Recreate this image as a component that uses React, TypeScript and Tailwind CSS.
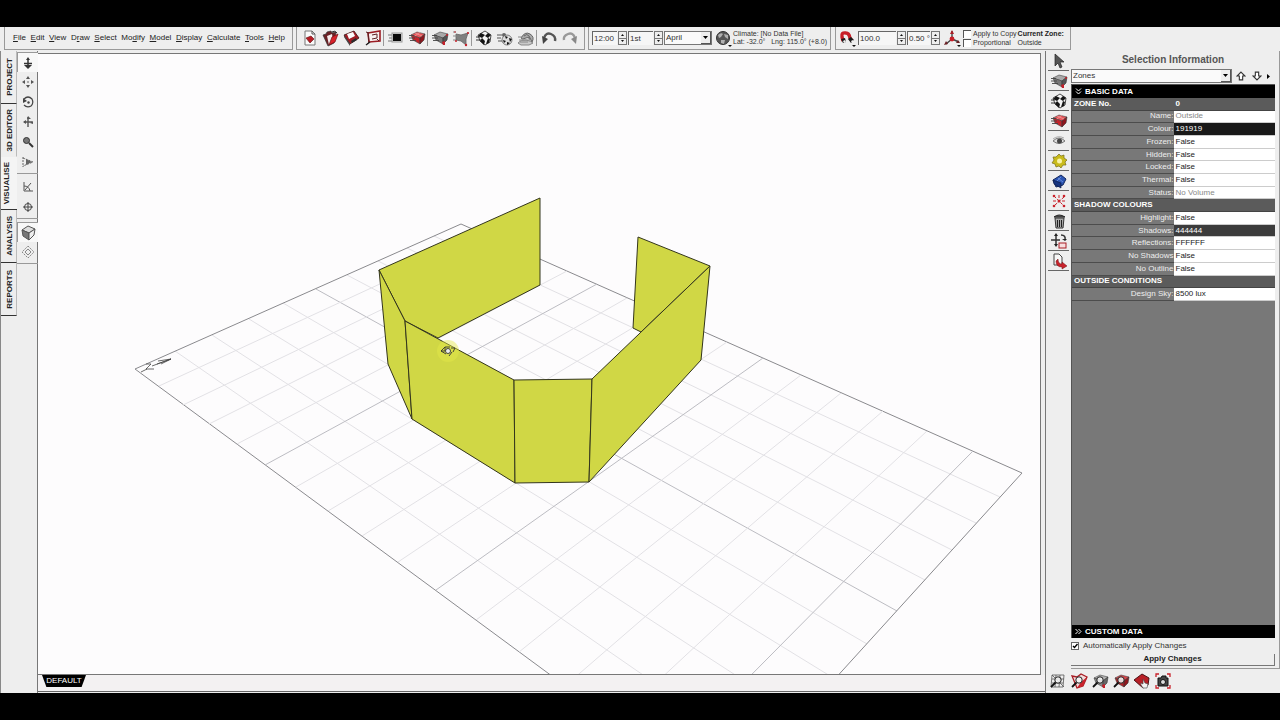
import type { ReactNode } from "react";

const MENUS = ["File", "Edit", "View", "Draw", "Select", "Modify", "Model", "Display", "Calculate", "Tools", "Help"];
// index of the underlined access key in each menu name
const ACCESS_KEYS = [0, 0, 0, 1, 0, 2, 0, 0, 0, 0, 0];

const TABS = ["PROJECT", "3D EDITOR", "VISUALISE", "ANALYSIS", "REPORTS"];

function Icon({ children }: { children: ReactNode }) {
  return (
    <svg width="18" height="18" viewBox="0 0 18 18" fill="none" aria-hidden="true">
      {children}
    </svg>
  );
}

// Tilted slab used by most of the model icons
function Slab({ top, left, right }: { top: string; left: string; right: string }) {
  return (
    <>
      <path d="M3 6 9 3 17 5 12 9z" fill={top} stroke="#444" strokeWidth="0.6" />
      <path d="M3 6 12 9 12 15 5 11z" fill={left} stroke="#444" strokeWidth="0.6" />
      <path d="M17 5 12 9 12 15 16 11z" fill={right} stroke="#333" strokeWidth="0.6" />
    </>
  );
}

function Lens() {
  return (
    <>
      <circle cx="9" cy="8" r="3.2" fill="#f4f4f4" fillOpacity="0.85" stroke="#222" />
      <path d="M6.5 10.5 2 15" stroke="#111" strokeWidth="1.8" />
    </>
  );
}

const SpeedLines = <path d="M1 6.5h5M1 9h6M2 11.5h6" stroke="#444" strokeWidth="0.9" />;

const NewIcon = (
  <Icon>
    <path d="M4 2h7l3 3v11H4z" fill="#fafafa" stroke="#777" />
    <path d="M11 2v3h3" stroke="#555" />
    <path d="m5 9 5-2 3 3-4 4z" fill="#b81c24" stroke="#5c1010" strokeWidth="0.6" />
  </Icon>
);

const OpenIcon = (
  <Icon>
    <path d="m1 6 3-1 1-2 4-1 1 2 4-1-2 11-6 3z" fill="#6b2226" stroke="#333" strokeWidth="0.7" />
    <path d="m5 7 5-2 1 6-4 5z" fill="#f5eded" />
    <path d="m7 16 3-8 6-3-3 8z" fill="#d9222a" stroke="#701015" strokeWidth="0.7" />
    <path d="M10 3q3-2 5 1" stroke="#222" />
  </Icon>
);

const SaveIcon = (
  <Icon>
    <path d="m1 6 10-4 5 7-9 6z" fill="#a01c24" stroke="#3a1113" strokeWidth="0.8" />
    <path d="m4 5 6-2 2 4-6 3z" fill="#fbfbfb" />
    <path d="m8 12 5-3 1 2-5 3z" fill="#2b2b2b" />
    <path d="m1 6 6 9v2L1 8z" fill="#444" />
  </Icon>
);

const PublishIcon = (
  <Icon>
    <path d="M4 4 16 2v10l-11 1z" fill="#f7f0f0" stroke="#9c1d24" strokeWidth="1.6" />
    <path d="m2 3 3 1M4 4l1 9-3 3M15 12l-2-2M8 6l5-1v4l-5 1" stroke="#5a2023" />
    <path d="m2 16 4-3" stroke="#222" strokeWidth="1.4" />
  </Icon>
);

const MonitorIcon = (
  <Icon>
    <path d="M1 6h5M2 9h4M1 12h5" stroke="#777" />
    <rect x="5" y="4" width="10" height="9" fill="#ddd" stroke="#999" />
    <path d="M6 5h8v7H6z" fill="#0a0a0a" />
  </Icon>
);

const RedModelIcon = (
  <Icon>
    <Slab top="#e8575b" left="#c4242b" right="#8f161d" />
    {SpeedLines}
    <path d="m7 4 7 3M12 3 7 7" stroke="#f3a0a0" strokeWidth="0.7" />
  </Icon>
);

const GreyModelIcon = (
  <Icon>
    <Slab top="#a9a9a9" left="#777" right="#555" />
    {SpeedLines}
    <path d="m11 13 3-1v4h-2z" fill="#c4202a" />
    <circle cx="16" cy="6" r="1" fill="#c4202a" />
  </Icon>
);

const NodesModelIcon = (
  <Icon>
    <path d="m4 5 5 1 7-2-2 6 0 6-5-4-5-1z" fill="#808080" stroke="#666" strokeWidth="0.8" />
    <path d="M1 3h3M1 7h4M1 11h3" stroke="#888" />
    <g fill="#c4202a">
      <circle cx="3" cy="3" r="0.8" />
      <circle cx="16" cy="4" r="1.1" />
      <circle cx="4" cy="12" r="1" />
      <circle cx="14" cy="16" r="1.2" />
    </g>
  </Icon>
);

const CheckModelIcon = (
  <Icon>
    <path d="m3 6 7-4 6 4-1 7-5 3-5-4z" fill="#f4f4f4" stroke="#222" strokeWidth="0.8" />
    <path d="m6 4 4 2-3 3-4-2zM13 4l3 2-3 3-3-2zM7 9l3 3-1 4-4-4zM13 9l2 1-1 4-3 1z" fill="#151515" />
    <path d="M1 8h4M1 11h5" stroke="#333" />
  </Icon>
);

const SphereIcon = (
  <Icon>
    <path d="M1 6h5M1 9h4M2 12h4" stroke="#555" />
    <circle cx="8" cy="6" r="2" fill="#666" />
    <circle cx="11" cy="11" r="5" fill="#ddd" stroke="#555" strokeWidth="0.7" />
    <path d="m9 7 3 1-2 2zM13 9l3 1-2 3zM7 11l3 1-2 2zM11 13l3 1-3 2z" fill="#111" />
  </Icon>
);

const ContourIcon = (
  <Icon>
    <path d="M1 14q3-4 8-3t7 3l-4 2H4z" fill="#c9c9c9" stroke="#888" />
    <path d="M4 9q4-7 9-4t2 8q-2-6-6-4t-5 0zM7 7q3-3 5 0t1 4" fill="#aaa" stroke="#666" />
    <path d="M1 8h4M2 11h12M3 13h8" stroke="#888" />
  </Icon>
);

const UndoIcon = (
  <Icon>
    <path d="M4 9q2-6 7-4 5 2 4 7" stroke="#555" strokeWidth="2.4" />
    <path d="m2 7 1 8 5-5z" fill="#444" />
  </Icon>
);

const RedoIcon = (
  <Icon>
    <path d="M14 9q-2-6-7-4-5 2-4 6" stroke="#999" strokeWidth="2.4" />
    <path d="m16 7-1 8-5-5z" fill="#888" />
  </Icon>
);

const GlobeIcon = (
  <Icon>
    <circle cx="9" cy="9" r="6.5" fill="#555" stroke="#333" />
    <path d="M4 6q3-3 5-1l-2 3-2 1zM10 5l4 1 0 4-3-2zM7 11l4 0-1 4-3-1z" fill="#b0b0b0" />
    <path d="M14 16h4l-2 2z" fill="#111" />
  </Icon>
);

const MagnetIcon = (
  <Icon>
    <path d="M5 12 4 8q-1-5 4-4 3 0 4 5l2 3" stroke="#c81f28" strokeWidth="3.4" />
    <path d="m3 10 4-1 1 4-3 1zM10 10l3-2 3 3-3 3z" fill="#1c1c1c" />
    <path d="m5 12 2-1 1 2-2 1zM13 12l2-1 1 1-2 2z" fill="#f2f2f2" />
    <path d="M14 16h4l-2 2z" fill="#111" />
  </Icon>
);

const AxisIcon = (
  <Icon>
    <path d="M9 10V2M9 10l-6 5M9 10l7 3" stroke="#444" strokeWidth="1.4" />
    <circle cx="9" cy="10" r="2.4" fill="#c81f28" />
    <path d="m7 5 2-4 2 4z" fill="#a81c24" />
    <path d="m1 16 2-4 2 3zM17 14l-4 0 2-3z" fill="#6b2024" />
    <path d="M14 16h4l-2 2z" fill="#111" />
  </Icon>
);

const FILE_TOOLS: { label: string; icon: ReactNode }[][] = [
  [
    { label: "New", icon: NewIcon },
    { label: "Open", icon: OpenIcon },
    { label: "Save", icon: SaveIcon },
    { label: "Publish", icon: PublishIcon },
  ],
  [
    { label: "Display", icon: MonitorIcon },
    { label: "Model", icon: RedModelIcon },
  ],
  [
    { label: "Group", icon: GreyModelIcon },
    { label: "Nodes", icon: NodesModelIcon },
  ],
  [
    { label: "Check model", icon: CheckModelIcon },
    { label: "Sphere", icon: SphereIcon },
    { label: "Contours", icon: ContourIcon },
  ],
  [
    { label: "Undo", icon: UndoIcon },
    { label: "Redo", icon: RedoIcon },
  ],
];

const VIEW_TOOLS: { label: string; icon: ReactNode; pressed?: boolean }[][] = [
  [
    {
      label: "Walk",
      pressed: true,
      icon: <Icon><path d="M9 3 7 6h4zM9 15l-4-4h8z" fill="#333" /><path d="M5 9.500h8M9 5v8" stroke="#333" strokeWidth="1.500" /></Icon>,
    },
    {
      label: "Pan",
      icon: <Icon><path d="m9 3-2 3h4zM9 15l-2-3h4zM3 9l3-2v4zM15 9l-3-2v4z" fill="#555" /><circle cx="9" cy="9" r="0.800" fill="#555" /></Icon>,
    },
    {
      label: "Orbit",
      icon: <Icon><path d="M5 6q4-4 8 0 2 4-1 7-4 2-7-1" stroke="#444" strokeWidth="1.2" /><path d="m4 5 0 5 4-2z" fill="#444" /><circle cx="9.500" cy="9.500" r="1.2" fill="#444" /></Icon>,
    },
    {
      label: "Roll",
      icon: <Icon><path d="M9 4v10M5 9h8" stroke="#555" strokeWidth="1.4" /><path d="m4 9 3-2v4zM9 3l3 3H8zM14 8v3l-3-1z" fill="#555" /></Icon>,
    },
    {
      label: "Zoom",
      icon: <Icon><circle cx="7.500" cy="7.500" r="3" fill="#777" stroke="#333" /><path d="m10 10 4 4" stroke="#333" strokeWidth="2" /></Icon>,
    },
    {
      label: "Perspective",
      icon: <Icon><path d="M4 4v10M4 5l10 4-10 4" stroke="#666" strokeDasharray="2 1" /><path d="M7 6v6l6-3z" fill="#666" /></Icon>,
    },
  ],
  [
    {
      label: "Angle",
      icon: <Icon><path d="M5 4v9h9M6 12l6-7M5 8q5 0 6 5" stroke="#555" /></Icon>,
    },
    {
      label: "Target",
      icon: <Icon><circle cx="9" cy="9" r="3.500" stroke="#444" /><path d="M9 4v10M4 9h10" stroke="#444" /></Icon>,
    },
  ],
  [
    {
      label: "Solid view",
      pressed: true,
      icon: <Icon><path d="m3 6 6-4 7 3-6 4z" fill="#ddd" stroke="#555" /><path d="m3 6 7 3v7l-6-4z" fill="#777" stroke="#555" /><path d="m16 5-6 4v7l5-5z" fill="#eee" stroke="#555" /></Icon>,
    },
    {
      label: "Wire view",
      icon: <Icon><path d="m9 3 6 6-6 6-6-6z" stroke="#888" strokeDasharray="2 1" /><path d="m9 6 3 3-3 3-3-3z" stroke="#888" /></Icon>,
    },
  ],
];

const PANEL_TOOLS: { label: string; icon: ReactNode }[] = [
  { label: "Select", icon: <Icon><path d="m5 2 0 12 3-3 2 5 2-1-2-5h4z" fill="#555" stroke="#222" strokeWidth="0.7" /></Icon> },
  { label: "Zones", icon: GreyModelIcon },
  { label: "Materials", icon: CheckModelIcon },
  { label: "Model", icon: RedModelIcon },
  {
    label: "Visibility",
    icon: <Icon><path d="M3 9q6-6 12 0-6 5-12 0z" fill="#ddd" stroke="#777" /><circle cx="9.500" cy="9" r="2.500" fill="#444" /><path d="M3 7q5-4 11-1" stroke="#aaa" /></Icon>,
  },
  {
    label: "Shadows",
    icon: <Icon><path d="m9 2 2 2 3-1 0 3 3 2-2 2 1 3-3 0-2 3-2-2-3 1-1-3-3-1 2-3-1-3 3 0z" fill="#c9bb1b" stroke="#766d18" strokeWidth="0.7" /><circle cx="9.500" cy="9" r="2.500" fill="#f9f3a8" /></Icon>,
  },
  {
    label: "Analysis grid",
    icon: <Icon><path d="m3 8 8-5 5 4-3 6-7 2z" fill="#2c56b4" stroke="#12265c" /><path d="m3 8 8 3 0 5-7-4z" fill="#163480" stroke="#0e1c48" strokeWidth="0.7" /><path d="m8 6 5 4M11 5 7 9" stroke="#7ea0e4" strokeWidth="0.7" /></Icon>,
  },
  {
    label: "Rays",
    icon: <Icon><path d="m4 4 10 10M14 5 5 13M9 3v3M3 9h4M12 9h4" stroke="#c9222b" strokeDasharray="3 1.500" /><g fill="#c9222b"><circle cx="9" cy="9" r="1.500" /><circle cx="4" cy="4" r="1.300" /><circle cx="14" cy="4" r="1.300" /><circle cx="4" cy="14" r="1.300" /><circle cx="14" cy="14" r="1.300" /></g></Icon>,
  },
  {
    label: "Delete",
    icon: <Icon><path d="M5 6h9l-1 10H6z" fill="#aaa" stroke="#333" /><path d="M7.500 8v7M9.500 8v7M11.500 8v7" stroke="#222" /><path d="M4 5q5-4 11 0z" fill="#666" stroke="#222" /></Icon>,
  },
  {
    label: "Transform",
    icon: <Icon><path d="M6 3v10M1 8h9M11 3q5 0 4 5" stroke="#333" strokeWidth="1.500" /><path d="m6 1 2 3H4zM6 15l-2-3h4zM15 9l-3-2h5z" fill="#222" /><rect x="9" y="11" width="7" height="5" fill="#f7dede" stroke="#a81c24" /></Icon>,
  },
  {
    label: "Export",
    icon: <Icon><path d="M4 2h5l3 3v8H4z" fill="#f6f6f6" stroke="#444" /><path d="M8 7q0 5 4 5v-2l5 4-5 3v-2q-6 0-6-6z" fill="#c9222b" stroke="#701015" strokeWidth="0.500" /></Icon>,
  },
];

const ZOOM_TOOLS: { label: string; icon: ReactNode }[] = [
  { label: "Zoom grid", icon: <Icon><path d="M3 3h12l-1 12H2zM7 3 6 15M11 3l-1 12M3 7h12M3 11h11M3 3l12 12" stroke="#555" strokeWidth="0.800" /><Lens /></Icon> },
  { label: "Zoom window", icon: <Icon><path d="m2 4 5 1 4-3 6 3-4 9-6 2z" fill="#f2dada" stroke="#a81c24" strokeWidth="1.300" /><path d="m11 10 6-5-4 9-6 2z" fill="#c9222b" /><Lens /></Icon> },
  { label: "Zoom all", icon: <Icon><Slab top="#b4b4b4" left="#8a8a8a" right="#666" /><path d="m11 13 3-1v4h-2z" fill="#c4202a" /><Lens /></Icon> },
  { label: "Zoom selection", icon: <Icon><Slab top="#d9464c" left="#b81f26" right="#8f161d" /><Lens /></Icon> },
  { label: "Pan to selection", icon: <Icon><path d="m1 8 8-6 7 4-1 7-5 3z" fill="#b81f26" stroke="#4c1215" /><path d="M10 16q-3-4-2-5l2 1V7l2 4 3 1-1 4z" fill="#f2f2f2" stroke="#444" strokeWidth="0.600" /></Icon> },
  { label: "Snapshot", icon: <Icon><path d="M2 5V2h3M13 2h3v3M2 13v3h3M16 13v3h-3" stroke="#c9222b" strokeWidth="1.300" /><path d="M4 6h3l1-2h4v2h2v8H4z" fill="#444" stroke="#111" /><circle cx="9" cy="10" r="2.500" fill="#ddd" stroke="#111" /></Icon> },
];

type Row = { label: string; value?: string; kind?: "head" | "muted" | "dark" | "grey" };

const ROWS: Row[] = [
  { label: "ZONE No.", value: "0", kind: "head" },
  { label: "Name:", value: "Outside", kind: "muted" },
  { label: "Colour:", value: "191919", kind: "dark" },
  { label: "Frozen:", value: "False" },
  { label: "Hidden:", value: "False" },
  { label: "Locked:", value: "False" },
  { label: "Thermal:", value: "False" },
  { label: "Status:", value: "No Volume", kind: "muted" },
  { label: "SHADOW COLOURS", kind: "head" },
  { label: "Highlight:", value: "False" },
  { label: "Shadows:", value: "444444", kind: "grey" },
  { label: "Reflections:", value: "FFFFFF" },
  { label: "No Shadows", value: "False" },
  { label: "No Outline", value: "False" },
  { label: "OUTSIDE CONDITIONS", kind: "head" },
  { label: "Design Sky:", value: "8500 lux" },
];

const VALUE_STYLE = {
  normal: "bg-white text-[#222]",
  muted: "bg-white text-[#888]",
  dark: "bg-[#191919] text-white",
  grey: "bg-[#3c3c3c] text-white",
};

// Ground plane: 10 x 16 cells seen in perspective, a heavier line every 5 cells.
const COLS = 10;
const CELLS = 16;

function project(col: number, cell: number) {
  const u = col / COLS;
  const v = cell / CELLS;
  const w = 1 + 0.2467 * u - 0.3726 * v;
  return {
    x: Math.round((439.7 * u + 318.6 * v + 135) / w),
    y: Math.round((-89.7 * u + 134.2 * v + 369) / w),
  };
}

function gridColor(i: number, last: number) {
  if (i === 0 || i === last) return "#8a8a8e";
  return i % 5 === 0 ? "#bcbcc2" : "#e2e1e5";
}

function GridLine({ from, to, color }: { from: { x: number; y: number }; to: { x: number; y: number }; color: string }) {
  return <line x1={from.x} y1={from.y} x2={to.x} y2={to.y} stroke={color} />;
}

const WALLS = [
  "379,270 540,198 540,285 438,338 405,321",
  "638,237 710,266 641,332 633,328",
  "379,270 405,321 412,419 388,364",
  "405,321 514,380 515,483 412,419",
  "514,380 592,379 589,482 515,483",
  "592,379 710,266 701,360 589,482",
];

function Scene() {
  const cols = Array.from({ length: COLS + 1 }, (_, i) => i);
  const cells = Array.from({ length: CELLS + 1 }, (_, i) => i);
  // light lines first so the heavy ones are not cut by them
  const order = (a: number, b: number, last: number) =>
    Number(a % 5 === 0 || a === last) - Number(b % 5 === 0 || b === last);

  return (
    <svg className="absolute inset-0 h-full w-full" viewBox="38 54 1002 620" preserveAspectRatio="xMinYMin slice" role="img" aria-label="Model view">
      {[...cols].sort((a, b) => order(a, b, COLS)).map((c) => (
        <GridLine key={`c${c}`} from={project(c, 0)} to={project(c, CELLS)} color={gridColor(c, COLS)} />
      ))}
      {[...cells].sort((a, b) => order(a, b, CELLS)).map((c) => (
        <GridLine key={`r${c}`} from={project(0, c)} to={project(COLS, c)} color={gridColor(c, CELLS)} />
      ))}
      {/* north arrow */}
      <path d="m141 372 6-3M146 364l5 0-5 5 8 0M152 366l19-7-13 2M171 359l-10 5M157 364l14-5" stroke="#444" strokeWidth="0.8" fill="none" />
      {WALLS.map((points) => (
        <polygon key={points} points={points} fill="#d0d745" stroke="#33351c" strokeLinejoin="round" />
      ))}
      {/* cursor with its highlight */}
      <circle cx="448" cy="351" r="11" fill="#e5e84a" fillOpacity="0.45" />
      <g fill="none" stroke="#333" strokeWidth="0.9">
        <circle cx="448" cy="351" r="2.500" fill="#eee" />
        <path d="m441 351 4-4v4zM445 347l5 0M451 348l4 0-2 4M452 352l-3 4M446 354l-5-3" />
      </g>
    </svg>
  );
}

function IconButton({ label, pressed, children }: { label: string; pressed?: boolean; children: ReactNode }) {
  return (
    <button
      type="button"
      aria-label={label}
      className={`flex h-5 w-[21px] flex-none items-center justify-center ${pressed ? "border-t border-l border-[#999] bg-[#f8f8f8]" : ""}`}
    >
      {children}
    </button>
  );
}

function Spinner({ label, value, width }: { label: string; value: string; width: string }) {
  return (
    <div className="flex items-center gap-px">
      <input
        aria-label={label}
        defaultValue={value}
        className={`h-3.5 border-t border-l border-[#666] bg-[#f6f6f6] pl-px text-[8px] leading-none text-[#333] outline-none ${width}`}
      />
      <span className="flex h-3.5 w-[9px] flex-col border border-[#777]">
        <button type="button" aria-label={`${label} up`} className="flex flex-1 items-center justify-center border-b border-[#777]">
          <svg width="3" height="2" viewBox="0 0 3 2"><path d="M0 2h3L1.500 0z" fill="#111" /></svg>
        </button>
        <button type="button" aria-label={`${label} down`} className="flex flex-1 items-center justify-center">
          <svg width="3" height="2" viewBox="0 0 3 2"><path d="M0 0h3L1.500 2z" fill="#111" /></svg>
        </button>
      </span>
    </div>
  );
}

function Combo({ label, value, width }: { label: string; value: string; width: string }) {
  return (
    <div className={`relative h-3.5 ${width}`}>
      <select
        aria-label={label}
        className="block h-full w-full appearance-none border border-[#777] bg-[#fafafa] pl-px text-[8px] leading-3 text-[#333] outline-none"
      >
        <option>{value}</option>
      </select>
      <span className="pointer-events-none absolute inset-y-px right-px flex w-[10px] items-center justify-center border-r border-b border-[#555] bg-[#eee]">
        <svg width="5" height="3" viewBox="0 0 5 3"><path d="M0 0h5L2.500 3z" fill="#000" /></svg>
      </span>
    </div>
  );
}

function TopBar() {
  return (
    <header className="flex h-6 flex-none pb-px pl-1">
      <nav className="flex w-[289px] items-center justify-between border-r border-b border-l border-[#999] pr-[7px] pl-2">
        {MENUS.map((name, i) => (
          <button key={name} type="button" className="text-[8px] leading-3">
            {name.slice(0, ACCESS_KEYS[i])}
            <u>{name[ACCESS_KEYS[i]]}</u>
            {name.slice(ACCESS_KEYS[i] + 1)}
          </button>
        ))}
      </nav>

      <div className="ml-[3px] flex w-[289px] items-center border-r border-b border-l border-[#999] pl-0.5">
        {FILE_TOOLS.map((group, i) => (
          <div key={i} className="flex items-center">
            {i > 0 && <span className="mr-px h-4 w-px bg-[#999]" />}
            {group.map((tool) => (
              <IconButton key={tool.label} label={tool.label}>{tool.icon}</IconButton>
            ))}
          </div>
        ))}
      </div>

      <div className="ml-[3px] flex w-[243px] items-center border-r border-b border-l border-[#999] pl-[3px]">
        <div className="flex gap-px">
          <Spinner label="Time" value="12:00" width="w-[25px]" />
          <Spinner label="Day" value="1st" width="w-[25px]" />
          <Combo label="Month" value="April" width="w-12" />
        </div>
        <IconButton label="Climate">{GlobeIcon}</IconButton>
        <p className="text-[7px] leading-2 whitespace-pre text-[#333]">
          Climate: [No Data File]{"\n"}Lat: -32.0°   Lng: 115.0° (+8.0)
        </p>
      </div>

      <div className="ml-1 flex w-[236px] items-center gap-px border-r border-b border-l border-[#999]">
        <IconButton label="Snap">{MagnetIcon}</IconButton>
        <Spinner label="Grid" value="100.0" width="w-[38px]" />
        <Spinner label="Angle" value="0.50 °" width="w-[23px]" />
        <IconButton label="Axes">{AxisIcon}</IconButton>
        <div className="flex flex-col gap-px text-[7px] leading-2 text-[#333]">
          {["Apply to Copy", "Proportional"].map((text) => (
            <label key={text} className="flex items-center gap-0.5 whitespace-nowrap">
              <input type="checkbox" className="h-2 w-2 appearance-none border-t border-l border-[#555] bg-white" />
              {text}
            </label>
          ))}
        </div>
        <div className="whitespace-nowrap">
          <p className="text-[7px] leading-[9px] font-bold">Current Zone:</p>
          <p className="text-[7px] leading-[9px] text-[#333]">Outside</p>
        </div>
      </div>
    </header>
  );
}

function SideTabs() {
  return (
    <div className="w-[17px] flex-none border-l border-[#888] text-[8px] font-bold">
      {TABS.map((tab) => (
        <button
          key={tab}
          type="button"
          className={`flex h-[53px] w-full items-center justify-center border-b border-[#333] ${tab === "VISUALISE" ? "bg-[#f4f4f4] pr-1" : "border-r border-r-[#bbb] pl-0.5"} ${tab === "3D EDITOR" ? "border-b-transparent" : ""}`}
        >
          <span className="rotate-180 [writing-mode:vertical-rl]">{tab}</span>
        </button>
      ))}
    </div>
  );
}

function ViewTools() {
  return (
    <div className="flex w-[21px] flex-none flex-col items-center border-r border-[#777] pt-px pl-px">
      {VIEW_TOOLS.map((group, i) => (
        <div key={i} className="mb-[3px] flex flex-col items-center border-b border-[#999] pb-px">
          {group.map((tool) => (
            <IconButton key={tool.label} label={tool.label} pressed={tool.pressed}>{tool.icon}</IconButton>
          ))}
        </div>
      ))}
    </div>
  );
}

function PropertyTable() {
  return (
    <table className="h-[203px] w-full table-fixed border-collapse text-[8px] leading-[10px]">
      <tbody>
        {ROWS.map((row) =>
          row.kind === "head" ? (
            <tr key={row.label} className="border-b border-[#444] bg-[#5b5b5b] text-white">
              <th scope="rowgroup" colSpan={row.value ? 1 : 2} className="p-0 pl-0.5 text-left">{row.label}</th>
              {row.value && <td className="p-0 pl-0.5 font-bold">{row.value}</td>}
            </tr>
          ) : (
            <tr key={row.label} className="border-b border-[#4c4c4c]">
              <th scope="row" className="p-0 text-right font-normal text-[#eee]">{row.label}</th>
              <td className={`border-b border-b-[#ccc] p-0 pl-0.5 ${VALUE_STYLE[row.kind ?? "normal"]}`}>{row.value}</td>
            </tr>
          ),
        )}
      </tbody>
    </table>
  );
}

function SectionBar({ label, open }: { label: string; open?: boolean }) {
  return (
    <button type="button" className="flex h-[13px] w-full flex-none items-center gap-[3px] bg-black pl-[3px] text-[8px] font-bold text-white">
      <svg className={open ? "rotate-90" : ""} width="7" height="7" viewBox="0 0 7 7" fill="none" stroke="#fff">
        <path d="m0.500 1 2.500 2.500L0.500 6M3.500 1 6 3.500 3.500 6" />
      </svg>
      {label}
    </button>
  );
}

function SelectionPanel() {
  return (
    <section className="flex min-w-0 flex-1 flex-col border-r border-b border-[#999] pr-1 pb-0.5">
      <h2 className="h-[18px] text-center text-[10px] leading-[18px] font-bold text-[#555]">
        Selection Information
      </h2>
      <div className="mb-px flex items-center">
        <Combo label="Category" value="Zones" width="flex-1" />
        <div className="flex w-[43px] items-center justify-between pr-1 pl-1">
          <button type="button" aria-label="Previous">
            <svg width="10" height="10" viewBox="0 0 9 9" fill="#fff" stroke="#333"><path d="M4.500 1 8 4.500H6V8H3V4.500H1z" /></svg>
          </button>
          <button type="button" aria-label="Next">
            <svg width="10" height="10" viewBox="0 0 9 9" fill="#fff" stroke="#333"><path d="M4.500 8 8 4.500H6V1H3v3.500H1z" /></svg>
          </button>
          <button type="button" aria-label="More">
            <svg width="4" height="5" viewBox="0 0 4 5"><path d="M0 0v5l3-2.500z" fill="#000" /></svg>
          </button>
        </div>
      </div>
      <div className="flex flex-1 flex-col justify-between border-t border-l border-[#555] bg-[#787878]">
        <div>
          <SectionBar label="BASIC DATA" open />
          <PropertyTable />
        </div>
        <SectionBar label="CUSTOM DATA" />
      </div>
      <label className="flex h-4 items-center gap-1 text-[8px] text-[#333]">
        <span className="relative flex h-2 w-2">
          <input type="checkbox" defaultChecked className="h-2 w-2 appearance-none border border-[#666] bg-white" />
          <svg className="pointer-events-none absolute inset-0" width="8" height="8" viewBox="0 0 8 8" fill="none" stroke="#000" strokeWidth="1.400"><path d="m2 4 1.500 1.500L6.500 2" /></svg>
        </span>
        Automatically Apply Changes
      </label>
      <button type="button" className="h-3 border-r border-b border-[#777] pb-0.5 text-[8px] leading-none font-bold">
        Apply Changes
      </button>
    </section>
  );
}

export default function App() {
  return (
    <div className="h-screen bg-black py-[27px] font-['Liberation_Sans',Arial,sans-serif] text-[#222]">
      <div className="flex h-full flex-col overflow-hidden bg-[#eeeeee]">
        <TopBar />
        <div className="flex min-h-0 flex-1">
          <SideTabs />
          <ViewTools />
          <main className="flex min-w-0 flex-1 flex-col border-r border-[#777] pt-0.5 pb-px">
            <div className="relative mr-1 min-h-0 flex-1 overflow-hidden border-t border-r border-b border-[#777] bg-[#fdfcfd]">
              <Scene />
            </div>
            <div className="h-[17px] flex-none border-b border-[#666] bg-[#f3f1f2] pl-1">
              <button
                type="button"
                className="block h-3 w-11 bg-black text-center text-[8px] leading-3 text-white [clip-path:polygon(0_0,100%_0,90%_100%,10%_100%)]"
              >
                DEFAULT
              </button>
            </div>
          </main>
          <aside className="flex w-[234px] flex-none flex-col">
            <div className="flex min-h-0 flex-1 pl-0.5">
              <div className="flex w-[23px] flex-none flex-col">
                {PANEL_TOOLS.map((tool) => (
                  <div key={tool.label} className="mr-0.5 flex h-5 items-center justify-center border-b border-[#666]">
                    <IconButton label={tool.label}>{tool.icon}</IconButton>
                  </div>
                ))}
              </div>
              <SelectionPanel />
            </div>
            <div className="flex h-6 flex-none items-center pl-px">
              {ZOOM_TOOLS.map((tool) => (
                <IconButton key={tool.label} label={tool.label}>{tool.icon}</IconButton>
              ))}
            </div>
          </aside>
        </div>
      </div>
    </div>
  );
}
